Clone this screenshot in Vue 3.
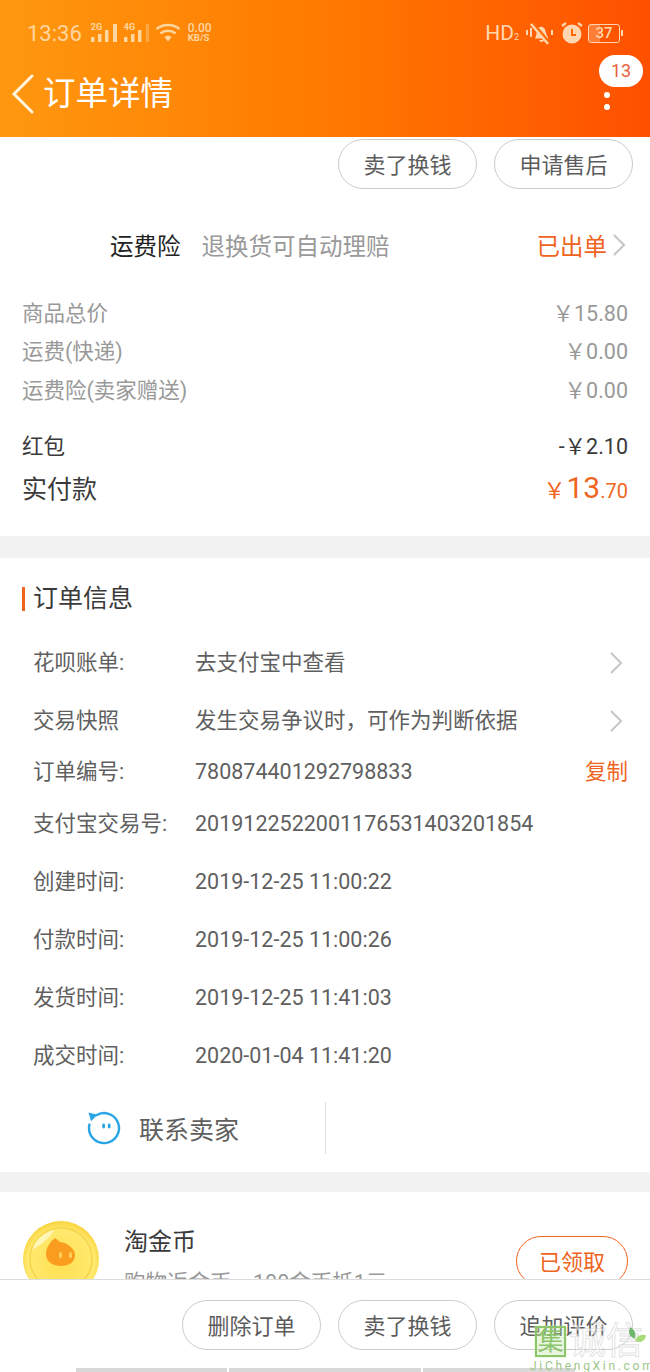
<script setup>
const prices = [
  { label: '商品总价', value: '￥15.80' },
  { label: '运费(快递)', value: '￥0.00' },
  { label: '运费险(卖家赠送)', value: '￥0.00' }
]
const infos = [
  { label: '花呗账单:', value: '去支付宝中查看', arrow: true, h: 58 },
  { label: '交易快照', value: '发生交易争议时，可作为判断依据', arrow: true, h: 58 },
  { label: '订单编号:', value: '780874401292798833', copy: true, h: 44 },
  { label: '支付宝交易号:', value: '2019122522001176531403201854', h: 59 },
  { label: '创建时间:', value: '2019-12-25 11:00:22', h: 58 },
  { label: '付款时间:', value: '2019-12-25 11:00:26', h: 58 },
  { label: '发货时间:', value: '2019-12-25 11:41:03', h: 58 },
  { label: '成交时间:', value: '2020-01-04 11:41:20', h: 58 }
]
</script>

<template>
  <div class="page">
    <header class="header">
      <div class="status">
        <div class="status-left">
          <span class="time">13:36</span>
          <span class="sig"><small>2G</small><svg width="28" height="19" viewBox="0 0 28 19"><g fill="#ffd6a0"><rect x="1" y="13" width="3.500" height="5"/><rect x="8" y="10" width="3.500" height="8"/><rect x="15" y="6" width="3.500" height="12"/><rect x="23" y="0" width="4" height="18"/></g></svg></span>
          <span class="sig"><small>4G</small><svg width="28" height="19" viewBox="0 0 28 19"><g fill="#ffd6a0"><rect x="1" y="13" width="3.500" height="5"/><rect x="8" y="10" width="3.500" height="8"/><rect x="15" y="6" width="3.500" height="12"/><rect x="23" y="0" width="3" height="18" opacity=".4"/></g></svg></span>
          <svg class="wifi" width="26" height="20" viewBox="0 0 26 20"><g fill="none" stroke="#ffd6a0" stroke-width="2.400"><path d="M1.500 6c6.500-5.300 16.500-5.300 23 0"/><path d="M5.500 10.500c4.400-3.600 10.600-3.600 15 0"/></g><path d="M9.500 14c2.200-1.600 4.800-1.600 7 0l-3.500 4.500z" fill="#ffd6a0"/></svg>
          <span class="speed"><b>0.00</b><b class="kb">KB/S</b></span>
        </div>
        <div class="status-right">
          <span class="hd">HD<small>2</small></span>
          <svg class="mute" width="30" height="26" viewBox="0 0 30 26"><g fill="#ffd6b0"><path d="M10 18c2-2 1-6 2.500-9 1-2.500 5-3 6.500-1 2 2 1.500 6 4 9v1.500H10z"/><path d="M14 20h5c-.500 2.500-4 2.500-5 0z"/><rect x="1" y="10" width="2" height="5"/><rect x="5" y="8" width="2" height="9"/><rect x="26" y="10" width="2" height="5"/></g><path d="M7 3l17 20" stroke="#ff6a00" stroke-width="4"/><path d="M6 4l17 20" stroke="#ffd6b0" stroke-width="2.400"/></svg>
          <svg class="alarm" width="24" height="24" viewBox="0 0 24 24"><circle cx="12" cy="13" r="9.500" fill="#ffd6b0"/><path d="M12 8v6h4" fill="none" stroke="#ff6a00" stroke-width="2"/><path d="M2 5l4-3M22 5l-4-3" stroke="#ffd6b0" stroke-width="2.200"/></svg>
          <span class="battery"><span class="battery-num">37</span></span>
        </div>
      </div>
      <div class="nav">
        <svg class="back" width="26" height="40" viewBox="0 0 26 40"><path d="M23 2L5 20l18 18" fill="none" stroke="#fff4e0" stroke-width="3" stroke-linecap="round"/></svg>
        <h1 class="title">订单详情</h1>
        <div class="more">
          <span class="badge">13</span>
          <i class="dot"></i>
          <i class="dot"></i>
        </div>
      </div>
    </header>

    <div class="top-actions">
      <button class="pill">卖了换钱</button>
      <button class="pill">申请售后</button>
    </div>

    <section class="summary">
      <div class="ins">
        <span class="ins-name">运费险</span>
        <span class="ins-desc">退换货可自动理赔</span>
        <span class="ins-state">已出单</span>
        <svg class="chev" width="14" height="24" viewBox="0 0 14 24"><path d="M2 2l10 10-10 10" fill="none" stroke="#c8c8c8" stroke-width="2.200"/></svg>
      </div>
      <div class="prices">
        <div v-for="p in prices" :key="p.label" class="price-row">
          <span>{{ p.label }}</span><span>{{ p.value }}</span>
        </div>
      </div>
      <div class="red-row"><span>红包</span><span>-￥2.10</span></div>
      <div class="pay-row">
        <span>实付款</span>
        <span class="pay"><small>￥</small><b>13</b><em>.70</em></span>
      </div>
    </section>

    <div class="gap gap-a"></div>

    <section class="info">
      <h2 class="info-title">订单信息</h2>
      <div class="info-list">
        <div v-for="r in infos" :key="r.label" class="info-row" :style="{ height: r.h + 'px' }">
          <span class="info-label">{{ r.label }}</span>
          <span class="info-value">{{ r.value }}</span>
          <svg v-if="r.arrow" class="info-chev" width="14" height="24" viewBox="0 0 14 24"><path d="M2 2l10 10-10 10" fill="none" stroke="#c8c8c8" stroke-width="2.200"/></svg>
          <span v-if="r.copy" class="copy">复制</span>
        </div>
      </div>
      <div class="contact">
        <div class="contact-main">
          <svg width="36" height="36" viewBox="0 0 36 36"><path d="M10 5.400a15 15 0 1 1-7 12.600c0-1.500.200-3 .700-4.400" fill="none" stroke="#2aa5e6" stroke-width="2.400"/><path d="M2.500 2.500l9 2.300-6.500 6.500z" fill="#2aa5e6"/><rect x="16.200" y="13.500" width="2.800" height="5" rx="1.400" fill="#2aa5e6"/><rect x="21.800" y="13.500" width="2.800" height="5" rx="1.400" fill="#2aa5e6"/></svg>
          <span>联系卖家</span>
        </div>
        <i class="contact-sep"></i>
      </div>
    </section>

    <div class="gap gap-b"></div>

    <section class="coin">
      <svg class="coin-icon" width="78" height="78" viewBox="0 0 78 78">
        <defs><radialGradient id="cg" cx="50%" cy="55%" r="55%"><stop offset="0" stop-color="#ffdf50"/><stop offset=".8" stop-color="#ffe96f"/><stop offset="1" stop-color="#f9d23a"/></radialGradient></defs>
        <circle cx="39" cy="39" r="38" fill="url(#cg)"/>
        <circle cx="39" cy="39" r="31" fill="none" stroke="#f6d44a" stroke-width="1.500"/>
        <path d="M10 30a30 30 0 0 1 22-20c-4 8-12 14-22 20z" fill="#fff6b8"/>
        <path d="M33 18l5 4c8 1 15 7 15 13 0 7-6 11-14 11s-15-4-15-12c0-6 4-12 9-16z" fill="#fa9c1e"/>
        <rect x="37" y="32" width="3" height="6" rx="1.500" fill="#ffd15c"/><rect x="47" y="32" width="3" height="6" rx="1.500" fill="#ffd15c"/>
      </svg>
      <div class="coin-text">
        <div class="coin-title">淘金币</div>
        <div class="coin-desc">购物返金币，100金币抵1元</div>
      </div>
      <button class="pill pill-orange">已领取</button>
    </section>

    <footer class="bottom">
      <div class="bottom-actions">
        <button class="pill">删除订单</button>
        <button class="pill">卖了换钱</button>
        <button class="pill">追加评价</button>
      </div>
      <div class="strip"><i></i><i></i><i></i></div>
    </footer>

    <div class="watermark">
      <div class="wm-top">
        <span class="wm-box">集</span>
        <span class="wm-cn">诚信</span>
      </div>
      <svg class="wm-heart" width="22" height="20" viewBox="0 0 26 20"><path d="M6 0c5 2 7 6 6 13C6 12 3 7 6 0z" fill="#6fb56a"/><path d="M12 16c1-6 7-9 13-7-1 7-7 10-13 7z" fill="#a6dc7c"/></svg>
      <div class="wm-en">JiChengXin.com</div>
    </div>
  </div>
</template>

<style>
html, body { margin: 0; background: #fff; }
</style>

<style scoped>
.page {
  position: relative;
  width: 650px;
  height: 1372px;
  overflow: hidden;
  background: #fff;
  font-family: Roboto, "Noto Sans CJK SC", sans-serif;
  color: #3a3a3a;
}
button { font-family: inherit; }
.header {
  height: 137px;
  background: linear-gradient(90deg, #ff9810 0%, #ff7a00 50%, #ff5000 100%);
  box-sizing: border-box;
  padding: 20px 27px 0 27px;
}
.status { display: flex; justify-content: space-between; align-items: center; height: 26px; }
.status-left, .status-right { display: flex; align-items: center; }
.time { font-size: 22px; color: #ffd6a0; margin-right: 8px; }
.sig { position: relative; display: flex; margin-right: 5px; width: 28px; height: 19px; }
.sig small { position: absolute; left: 1px; top: -1px; font-size: 9px; font-weight: 700; color: #ffd6a0; line-height: 9px; }
.sig svg { display: block; }
.wifi { margin: 0 7px 0 -1px; }
.speed { display: flex; flex-direction: column; color: #ffd6a0; font-size: 12px; line-height: 10px; }
.speed b { font-weight: 500; }
.speed .kb { font-size: 9.500px; font-weight: 700; }
.status-right { margin-right: 3px; }
.hd { font-size: 21px; color: #ffd6b0; margin-right: 6px; }
.hd small { font-size: 9px; }
.mute { margin-right: 5px; }
.alarm { margin-right: 4px; }
.battery {
  position: relative;
  width: 30px; height: 17px;
  border: 1.500px solid #ffd6b0;
  border-radius: 3px;
  display: flex; align-items: center; justify-content: center;
  background: linear-gradient(90deg, rgba(255,214,176,.3) 37%, transparent 37%);
}
.battery::after {
  content: ""; position: absolute; right: -4px; top: 5px; width: 2px; height: 6px; background: #ffd6b0;
}
.battery-num { font-size: 15px; color: #ffd6b0; font-weight: 500; }
.nav { position: relative; display: flex; align-items: center; height: 54px; margin: 21px 0 0 -18px; }
.back { flex: none; }
.title { margin: 0 0 0 8px; font-size: 32.500px; font-weight: 400; color: #fff; line-height: 44px; }
.more {
  position: absolute; right: -27px; top: -2px; width: 60px;
  display: flex; flex-direction: column; align-items: center;
}
.badge {
  position: absolute; left: 9px; top: -10px;
  width: 44px; height: 32px; border-radius: 16px; background: #fff;
  color: #e8603a; font-size: 18px; line-height: 32px; text-align: center;
}
.dot { width: 6px; height: 6px; border-radius: 50%; background: #fff; margin-bottom: 6px; position: relative; left: -13px; top: 27px; }

.top-actions {
  display: flex; justify-content: flex-end; gap: 17px;
  padding: 2px 17px 0 0; height: 50px;
}
.pill {
  width: 139px; height: 50px; box-sizing: border-box;
  border: 1px solid #cbcbcb; border-radius: 25px; background: #fff;
  color: #5c5c5c; font-size: 22px; padding: 3px 0 0; line-height: 1;
}
.summary { height: 347px; box-sizing: border-box; padding: 0 22px; }
.ins { display: flex; align-items: center; height: 48px; padding-top: 32px; padding-left: 88px; }
.ins-name { font-size: 23.500px; color: #222; margin-right: 21px; }
.ins-desc { font-size: 23.500px; color: #999; flex: 1; }
.ins-state { font-size: 23.500px; color: #f0651e; margin-right: 5px; }
.chev { margin-right: 2px; }
.prices { margin-top: 23px; }
.price-row { display: flex; justify-content: space-between; align-items: center; height: 38.500px; font-size: 21.500px; color: #999; }
.red-row { display: flex; justify-content: space-between; align-items: center; height: 40px; margin-top: 17px; font-size: 21.500px; color: #3a3a3a; }
.pay-row { display: flex; justify-content: space-between; align-items: center; height: 44px; font-size: 25px; color: #3a3a3a; }
.pay { color: #f0651e; display: flex; align-items: baseline; padding-top: 2px; }
.pay small { font-size: 22px; margin-right: 1px; }
.pay b { font-size: 30px; font-weight: 400; }
.pay em { font-style: normal; font-size: 20px; }

.gap { background: #f2f2f2; }
.gap-a { height: 22px; }
.gap-b { height: 20px; }

.info { height: 614px; box-sizing: border-box; padding-top: 29px; background: #fff; }
.info-title {
  margin: 0 0 0 22px; padding-left: 8px;
  border-left: 3px solid #f0651e;
  font-size: 25px; font-weight: 400; line-height: 24px; color: #3a3a3a;
  height: 24px;
}
.info-list { margin-top: 23px; padding: 0 22px 0 33px; }
.info-row { display: flex; align-items: center; font-size: 21.500px; line-height: 30px; color: #5f5f5f; }
.info-label { width: 162px; flex: none; }
.info-value { flex: 1; }
.info-chev { margin-right: 5px; }
.copy { color: #f0651e; }
.contact { display: flex; align-items: center; height: 52px; margin-top: 17px; }
.contact-main { width: 325px; box-sizing: border-box; padding-left: 86px; display: flex; align-items: center; gap: 17px; font-size: 25px; color: #5f5f5f; }
.contact-main svg { flex: none; }
.contact-sep { width: 1px; height: 52px; background: #e2e2e2; }

.coin { display: flex; align-items: flex-start; padding: 28px 22px 0 22px; }
.coin-icon { flex: none; }
.coin-text { flex: 1; margin-left: 24px; }
.coin-title { font-size: 24px; color: #3a3a3a; line-height: 36px; margin-top: 4px; }
.coin-desc { font-size: 21.500px; color: #999; line-height: 30px; margin-top: 8px; }
.pill-orange { flex: none; width: 112px; margin-top: 16px; border-color: #f0651e; color: #f0651e; }

.bottom {
  position: absolute; left: 0; right: 0; bottom: 0; height: 93px;
  box-sizing: border-box;
  background: #fff; border-top: 1px solid #dcdcdc;
}
.bottom-actions { display: flex; justify-content: flex-end; gap: 17px; padding: 20px 17px 0 0; }
.strip { position: absolute; left: 76px; top: 88px; width: 499px; height: 4px; display: grid; grid-template-columns: 151px 192px 152px; gap: 2px; }
.strip i { background: #d8d8d8; }
.watermark { position: absolute; left: 530px; top: 1323px; width: 120px; height: 49px; pointer-events: none; }
.wm-top { display: flex; align-items: center; height: 37px; }
.wm-box { flex: none; width: 31px; height: 31px; border: 2px solid #8cc56c; background: rgba(190,230,160,.35); box-shadow: 0 0 2px #cbeaa8; color: #8cc56c; font-size: 26px; line-height: 27px; text-align: center; box-sizing: border-box; margin-left: 5px; }
.wm-cn { font-size: 37px; color: rgba(255,255,255,.5); -webkit-text-stroke: 1px rgba(190,190,190,.45); margin-left: 3px; white-space: nowrap; line-height: 36px; }
.wm-heart { position: absolute; right: 3px; top: 3px; }
.wm-en { font-size: 12px; line-height: 12px; letter-spacing: 2.700px; color: #9cc58a; white-space: nowrap; }
</style>
